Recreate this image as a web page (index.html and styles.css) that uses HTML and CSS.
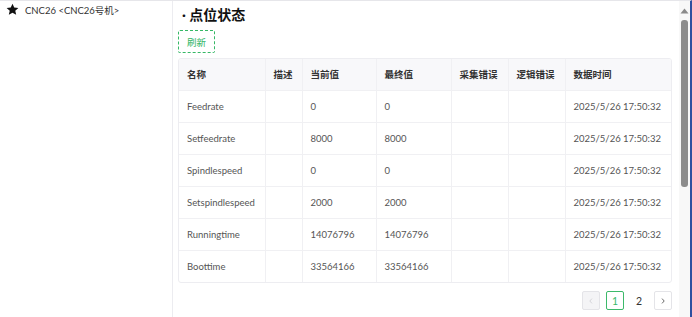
FILE: index.html
```html
<!DOCTYPE html>
<html lang="zh">
<head>
<meta charset="utf-8">
<link rel="stylesheet" href="styles.css">
</head>
<body>
<div class="app">
  <aside class="sidebar">
    <div class="node">
      <svg class="star" viewBox="0 0 24 24" width="13" height="13"><path d="M12 1.2l3.2 7.1 7.6.8-5.7 5.1 1.7 7.6L12 17.9l-6.8 3.9 1.7-7.6-5.7-5.1 7.6-.8z" fill="#111"/></svg>
      <span class="node-label">CNC26 &lt;CNC26号机&gt;</span>
    </div>
  </aside>
  <main class="main">
    <div class="content">
      <h2 class="title">· 点位状态</h2>
      <button class="btn-refresh">刷新</button>
      <div class="table-wrap">
        <table class="grid">
          <colgroup>
            <col style="width:86px"><col style="width:37px"><col style="width:74px"><col style="width:75px"><col style="width:57px"><col style="width:57px"><col style="width:108px">
          </colgroup>
          <thead>
            <tr><th>名称</th><th>描述</th><th>当前值</th><th>最终值</th><th>采集错误</th><th>逻辑错误</th><th>数据时间</th></tr>
          </thead>
          <tbody>
            <tr><td>Feedrate</td><td></td><td>0</td><td>0</td><td></td><td></td><td>2025/5/26 17:50:32</td></tr>
            <tr><td>Setfeedrate</td><td></td><td>8000</td><td>8000</td><td></td><td></td><td>2025/5/26 17:50:32</td></tr>
            <tr><td>Spindlespeed</td><td></td><td>0</td><td>0</td><td></td><td></td><td>2025/5/26 17:50:32</td></tr>
            <tr><td>Setspindlespeed</td><td></td><td>2000</td><td>2000</td><td></td><td></td><td>2025/5/26 17:50:32</td></tr>
            <tr><td>Runningtime</td><td></td><td>14076796</td><td>14076796</td><td></td><td></td><td>2025/5/26 17:50:32</td></tr>
            <tr><td>Boottime</td><td></td><td>33564166</td><td>33564166</td><td></td><td></td><td>2025/5/26 17:50:32</td></tr>
          </tbody>
        </table>
      </div>
      <div class="pager">
        <span class="pg pg-nav pg-disabled"><svg viewBox="0 0 10 10" width="8" height="8"><path d="M6.2 2L3.5 5l2.7 3" fill="none" stroke="#cfcfd4" stroke-width="1.1"/></svg></span>
        <span class="pg pg-active">1</span>
        <span class="pg">2</span>
        <span class="pg pg-nav"><svg viewBox="0 0 10 10" width="8" height="8"><path d="M3.8 2L6.5 5 3.8 8" fill="none" stroke="#555" stroke-width="1.1"/></svg></span>
      </div>
    </div>
    <div class="scrollbar">
      <svg class="sb-arrow" viewBox="0 0 9 6" width="9" height="6"><path d="M4.5 0.5L8.5 5.5H0.5z" fill="#8a8a8a"/></svg>
      <div class="sb-thumb"></div>
    </div>
  </main>
</div>
</body>
</html>
```
FILE: styles.css
```css
* { box-sizing: border-box; }
html, body { margin: 0; padding: 0; height: 100%; }
body {
  font-family: Lato, "Noto Sans CJK SC", sans-serif;
  color: #333;
  background: #fff;
  overflow: hidden;
}
.app {
  display: flex;
  height: 317px;
  border-top: 1px solid #e6e6ea;
  border-right: 2px solid #2f4f9f;
}
.sidebar {
  width: 173px;
  flex: none;
  border-right: 1px solid #ececf0;
  padding: 1px 0 0 6px;
}
.node {
  display: flex;
  align-items: center;
  gap: 6px;
  height: 15px;
}
.star { flex: none; }
.node-label {
  font-size: 9.5px;
  color: #333;
  white-space: nowrap;
}
.main {
  flex: 1;
  display: flex;
  overflow: hidden;
}
.content {
  flex: 1;
  padding: 4px 0 0 5px;
}
.title {
  margin: 0 0 0 4px;
  font-size: 14px;
  font-weight: 700;
  line-height: 20px;
  color: #111;
}
.btn-refresh {
  display: block;
  margin-top: 5px;
  width: 37px;
  height: 23px;
  padding: 0;
  border: 1px dashed #36b866;
  border-radius: 2px;
  background: #fff;
  color: #2fb35f;
  font-family: Lato, "Noto Sans CJK SC", sans-serif;
  font-size: 9.5px;
}
.table-wrap {
  margin-top: 5px;
  width: 494px;
  border: 1px solid #ededf1;
  border-radius: 3px;
  overflow: hidden;
}
.grid {
  width: 100%;
  border-collapse: collapse;
  table-layout: fixed;
  font-size: 9.5px;
}
.grid th, .grid td {
  height: 32px;
  padding: 0 8px;
  text-align: left;
  white-space: nowrap;
  border-left: 1px solid #f0f0f3;
  border-top: 1px solid #f0f0f3;
}
.grid th:first-child, .grid td:first-child { border-left: none; }
.grid thead th {
  border-top: none;
  background: #f8f8fa;
  font-weight: 600;
  color: #333;
  height: 31px;
}
.grid td { color: #555; }
.pager {
  display: flex;
  justify-content: flex-end;
  gap: 6px;
  width: 494px;
  margin-top: 8px;
}
.pg {
  display: flex;
  align-items: center;
  justify-content: center;
  width: 18px;
  height: 19px;
  font-size: 10.5px;
  color: #333;
  border: 1px solid transparent;
  border-radius: 2px;
}
.pg-nav { border-color: #e4e4e8; background: #fff; }
.pg-disabled { background: #f4f4f6; }
.pg-active { border-color: #3cb96a; color: #3cb96a; }
.scrollbar {
  width: 11px;
  flex: none;
  background: #f8f8f8;
  display: flex;
  flex-direction: column;
  align-items: center;
  padding-top: 7px;
}
.sb-arrow { display: block; }
.sb-thumb {
  margin-top: 6px;
  width: 7px;
  height: 167px;
  background: #8c8c8c;
  border-radius: 3px;
}
```
